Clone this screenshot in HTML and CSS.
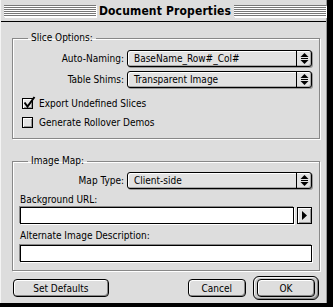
FILE: index.html
```html
<!DOCTYPE html>
<html lang="en">
<head>
  <meta charset="UTF-8" />
  <title>Document Properties</title>
  <link rel="stylesheet" href="styles.css">
</head>
<body>

<div class="window">
  <!-- title bar -->
  <div class="titlebar">
    <div class="stripes"></div>
    <div class="title">Document Properties</div>
    <div class="stripes"></div>
  </div>

  <div class="content">
    <fieldset class="group slice-group">
      <legend>Slice Options:</legend>
      <div class="row">
        <span class="label">Auto-Naming:</span>
        <div class="popup">
          <span class="popup-text">BaseName_Row#_Col#</span>
          <span class="popup-arrows">
            <svg width="9" height="11" viewBox="0 0 9 11"><path d="M4.5 0L8.5 4H0.5Z M0.5 7H8.5L4.5 11Z" fill="#000"/><rect x="1" y="5" width="7" height="1" fill="#000"/></svg>
          </span>
        </div>
      </div>
      <div class="row">
        <span class="label">Table Shims:</span>
        <div class="popup">
          <span class="popup-text">Transparent Image</span>
          <span class="popup-arrows">
            <svg width="9" height="11" viewBox="0 0 9 11"><path d="M4.5 0L8.5 4H0.5Z M0.5 7H8.5L4.5 11Z" fill="#000"/><rect x="1" y="5" width="7" height="1" fill="#000"/></svg>
          </span>
        </div>
      </div>
      <div class="check first-check">
        <span class="box">
          <svg width="14" height="14" viewBox="0 0 14 14"><path d="M2.5 6.5L5.5 10.5L12.5 1" fill="none" stroke="#000" stroke-width="2"/></svg>
        </span>
        Export Undefined Slices
      </div>
      <div class="check">
        <span class="box"></span>
        Generate Rollover Demos
      </div>
    </fieldset>

    <fieldset class="group map-group">
      <legend>Image Map:</legend>
      <div class="row">
        <span class="label">Map Type:</span>
        <div class="popup">
          <span class="popup-text">Client-side</span>
          <span class="popup-arrows">
            <svg width="9" height="11" viewBox="0 0 9 11"><path d="M4.5 0L8.5 4H0.5Z M0.5 7H8.5L4.5 11Z" fill="#000"/><rect x="1" y="5" width="7" height="1" fill="#000"/></svg>
          </span>
        </div>
      </div>
      <div class="field-label url-label">Background URL:</div>
      <div class="url-row">
        <div class="textbox"></div>
        <div class="arrow-btn">
          <svg width="5" height="9" viewBox="0 0 5 9"><path d="M0 0L5 4.5L0 9Z" fill="#000"/></svg>
        </div>
      </div>
      <div class="field-label alt-label">Alternate Image Description:</div>
      <div class="textbox"></div>
    </fieldset>

    <div class="buttons">
      <button class="btn defaults">Set Defaults</button>
      <button class="btn cancel">Cancel</button>
      <span class="default-ring"><button class="btn ok">OK</button></span>
    </div>
  </div>
</div>

</body>
</html>
```

FILE: styles.css
```css
body {
  margin: 0;
  background: #000;
  font-family: 'DejaVu Sans Condensed', 'DejaVu Sans', sans-serif;
  font-size: 10px;
  color: #000;
}
.window {
  width: 327px;
  height: 303px;
  box-sizing: border-box;
  background: #dddddd;
  border-left: 1px solid #f4f4f4;
  border-right: 1px solid #999;
  display: flex;
  flex-direction: column;
}

/* title bar */
.titlebar {
  height: 21px;
  border-bottom: 1px solid #000;
  display: flex;
  align-items: center;
  padding-left: 3px;
  gap: 3px;
}
.stripes {
  flex: 1;
  height: 12px;
  margin-top: 1px;
  background: repeating-linear-gradient(to bottom, #777 0 1px, #fff 1px 2px);
  box-shadow: 1px 1px 0 #fff;
}
.title {
  font-weight: bold;
  font-size: 12px;
  letter-spacing: 0.15px;
}

.content {
  flex: 1;
  padding: 10px 7px 0 11px;
}

/* group boxes */
.group {
  margin: 0;
  width: 308px;
  box-sizing: border-box;
  border: 1px solid #888;
  box-shadow: inset 1px 1px 0 #fff, 1px 1px 0 #fff;
  padding: 6px 7px 6px 7px;
}
.group legend {
  padding: 0 3px;
  margin-left: 8px;
  line-height: 12px;
}
.map-group {
  margin-top: 16px;
  padding-top: 5px;
  padding-bottom: 8px;
}

.row {
  display: flex;
  align-items: center;
  gap: 3px;
  margin-bottom: 4px;
}
.label {
  width: 104px;
  text-align: right;
}
.popup {
  width: 185px;
  height: 17px;
  box-sizing: border-box;
  border: 1px solid #000;
  border-radius: 3px;
  background: #e2e2e2;
  box-shadow: inset 1px 1px 0 #fff, inset -1px -1px 0 #aaa, 1px 1px 0 #999;
  display: flex;
  align-items: center;
}
.popup-text {
  flex: 1;
  padding-left: 6px;
}
.popup-arrows {
  width: 14px;
  height: 100%;
  border-left: 1px solid #000;
  display: flex;
  align-items: center;
  justify-content: center;
}
.popup-arrows svg {
  display: block;
}

/* checkboxes */
.check {
  display: flex;
  align-items: center;
  gap: 6px;
  height: 19px;
  margin-left: 2px;
}
.first-check {
  margin-top: 6px;
}
.box {
  width: 11px;
  height: 11px;
  box-sizing: border-box;
  border: 1px solid #000;
  background: #e4e4e4;
  box-shadow: inset 1px 1px 0 #fff, inset -1px -1px 0 #999;
  position: relative;
}
.box svg {
  position: absolute;
  left: -1px;
  top: -3px;
}

/* text fields */
.field-label {
  line-height: 12px;
}
.url-label {
  margin: 5px 0 1px 0;
}
.alt-label {
  margin: 6px 0 3px 0;
}
.textbox {
  height: 17px;
  box-sizing: border-box;
  border: 1px solid #000;
  background: #fff;
  box-shadow: -1px -1px 0 #888, 1px 1px 0 #fff;
  flex: 1;
}
.url-row {
  display: flex;
  gap: 3px;
}
.arrow-btn {
  width: 15px;
  height: 17px;
  box-sizing: border-box;
  border: 1px solid #000;
  background: #e2e2e2;
  box-shadow: inset 1px 1px 0 #fff, inset -1px -1px 0 #999;
  display: flex;
  align-items: center;
  justify-content: center;
}

/* buttons */
.buttons {
  display: flex;
  align-items: center;
  margin-top: 5px;
}
.btn {
  font-family: inherit;
  font-size: 10px;
  color: #000;
  height: 18px;
  padding: 0;
  border: 1px solid #000;
  border-radius: 4px;
  background: #dedede;
  box-shadow: inset 1px 1px 0 #fff, inset -1px -1px 0 #888;
}
.defaults {
  width: 100px;
  margin-left: 1px;
}
.cancel {
  width: 61px;
  margin-left: 79px;
}
.default-ring {
  margin-left: 7px;
  padding: 2px 3px;
  border: 1px solid #000;
  border-radius: 6px;
  background: #c8c8c8;
  box-shadow: inset 1px 1px 0 #f4f4f4, inset -1px -1px 0 #888;
  display: flex;
}
.ok {
  width: 58px;
}
```
